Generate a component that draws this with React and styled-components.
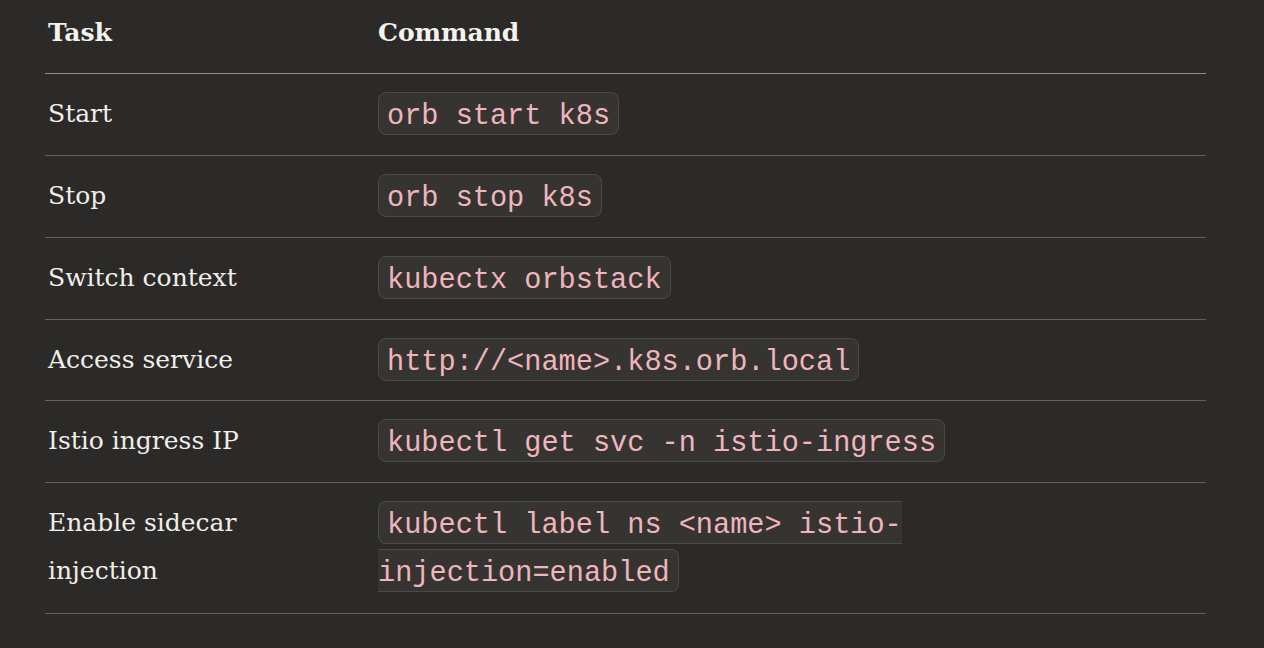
import React from 'react';
import styled, { createGlobalStyle } from 'styled-components';

const rows = [
    { task: 'Start', cmd: 'orb start k8s' },
    { task: 'Stop', cmd: 'orb stop k8s' },
    { task: 'Switch context', cmd: 'kubectx orbstack' },
    { task: 'Access service', cmd: 'http://<name>.k8s.orb.local' },
    { task: 'Istio ingress IP', cmd: 'kubectl get svc -n istio-ingress' },
    { task: 'Enable sidecar injection', cmd: 'kubectl label ns <name> istio-injection=enabled' },
];

export default () => {
    return (
        <>
            <Global />
            <Page>
                <Table>
                    <colgroup>
                        <col style={{ width: '330px' }} />
                        <col />
                    </colgroup>
                    <thead>
                        <tr>
                            <Head>Task</Head>
                            <Head>Command</Head>
                        </tr>
                    </thead>
                    <tbody>
                        {rows.map((row, index) => (
                            <Row key={index}>
                                <TaskCell>{row.task}</TaskCell>
                                <CodeCell>
                                    <Code>{row.cmd}</Code>
                                </CodeCell>
                            </Row>
                        ))}
                    </tbody>
                </Table>
            </Page>
        </>
    );
};

const Global = createGlobalStyle`
    html, body {
        margin: 0;
        padding: 0;
        background: #2b2a28;
    }
`;

const Page = styled.div`
    padding: 0 58px 40px 45px;
    background: #2b2a28;
    min-height: 648px;
    box-sizing: border-box;
`;

const Table = styled.table`
    width: 100%;
    border-collapse: collapse;
    table-layout: fixed;
`;

const Head = styled.th`
    text-align: left;
    padding: 9px 24px 16px 3px;
    font-family: "DejaVu Serif", "Liberation Serif", serif;
    font-size: 25px;
    font-weight: 700;
    line-height: 48px;
    color: #f4f2ed;
    border-bottom: 1px solid #8e8d89;
`;

const Row = styled.tr`
    & > td {
        vertical-align: top;
        line-height: 48px;
        border-bottom: 1px solid #62615c;
    }
`;

const TaskCell = styled.td`
    padding: 16px 24px 17px 3px;
    font-family: "DejaVu Serif", "Liberation Serif", serif;
    font-size: 25px;
    color: #f0eee9;

    ${Row}:nth-child(4) > & {
        padding-bottom: 16px;
    }

    ${Row}:last-child > & {
        padding-bottom: 18px;
    }
`;

const CodeCell = styled.td`
    padding: 19px 24px 14px 3px;
    font-family: "Liberation Mono", "DejaVu Sans Mono", monospace;
    font-size: 28.6px;

    ${Row}:nth-child(4) > & {
        padding-bottom: 13px;
    }

    ${Row}:last-child > & {
        padding-bottom: 15px;
    }
`;

const Code = styled.code`
    font-family: "Liberation Mono", "DejaVu Sans Mono", monospace;
    font-size: 28.6px;
    color: #f0b4bd;
    background: #353431;
    border: 1px solid #4a4945;
    border-radius: 8px;
    padding: 7px 8px 1px;
`;
